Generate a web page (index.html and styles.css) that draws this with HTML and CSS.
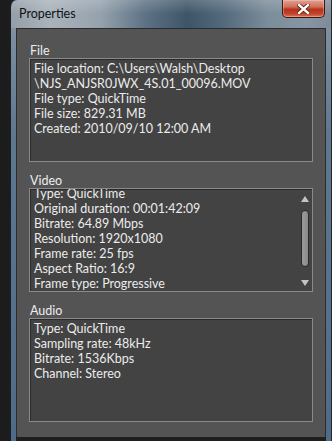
FILE: index.html
```html
<!DOCTYPE html>
<html>
<head>
	<title>Properties</title>
	<link rel="stylesheet" href="styles.css">
</head>
<body>
	<div class="window">
		<div class="titlebar">
			<span class="title">Properties</span>
			<button type="button" class="close">
				<svg width="13" height="10" viewBox="0 0 13 10">
					<path d="M2 1 L11 9 M11 1 L2 9" stroke="#5a1a10" stroke-width="4" stroke-linecap="square"/>
					<path d="M2 1 L11 9 M11 1 L2 9" stroke="#fff" stroke-width="2.4" stroke-linecap="square"/>
				</svg>
			</button>
		</div>

		<div class="client">
			<div class="panel">
				<div class="label">File</div>
				<div class="box">
					<div class="lines">
						<div>File location: C:\Users\Walsh\Desktop</div>
						<div>\NJS_ANJSR0JWX_4S.01_00096.MOV</div>
						<div>File type: QuickTime</div>
						<div>File size: 829.31 MB</div>
						<div>Created: 2010/09/10 12:00 AM</div>
					</div>
				</div>

				<div class="label">Video</div>
				<div class="box">
					<div class="viewport">
						<div class="lines scrolled">
							<div>Type: QuickTime</div>
							<div>Original duration: 00:01:42:09</div>
							<div>Bitrate: 64.89 Mbps</div>
							<div>Resolution: 1920x1080</div>
							<div>Frame rate: 25 fps</div>
							<div>Aspect Ratio: 16:9</div>
							<div>Frame type: Progressive</div>
						</div>
					</div>
					<div class="scrollbar">
						<div class="arrow-up"></div>
						<div class="thumb"></div>
						<div class="arrow-down"></div>
					</div>
				</div>

				<div class="label">Audio</div>
				<div class="box">
					<div class="lines">
						<div>Type: QuickTime</div>
						<div>Sampling rate: 48kHz</div>
						<div>Bitrate: 1536Kbps</div>
						<div>Channel: Stereo</div>
					</div>
				</div>
			</div>
		</div>
	</div>
</body>
</html>
```

FILE: styles.css
```css
html, body {
	margin: 0;
	height: 100%;
	overflow: hidden;
}

body {
	background: linear-gradient(90deg, #1c1c1c, #2e2e2e 70%, #262626);
	font-family: "Lato", "Liberation Sans", sans-serif;
	font-size: 12.5px;
	color: #ececec;
}

.window {
	margin-left: 10px;
	width: 321px;
	height: 441px;
	border-left: 1px solid #1a1f26;
	border-radius: 7px 0 0 0;
	padding: 0 5px 0 5px;
	box-sizing: border-box;
	background:
		linear-gradient(180deg, rgba(255,255,255,0.18), rgba(255,255,255,0) 14px) 0 0 / 100% 28px no-repeat,
		linear-gradient(90deg, #939ea8 0%, #aab3bb 12%, #95a2ad 28%, #5d7284 42%, #3e5568 55%, #52687b 66%, #7b8c9a 80%, #8796a2 92%, #7d8c98 100%) 0 0 / 100% 28px no-repeat,
		linear-gradient(180deg, #8797a6 0%, #5f7890 30%, #4e6b88 100%);
}

.titlebar {
	display: flex;
	justify-content: space-between;
	align-items: flex-start;
	height: 28px;
}

.title {
	font-size: 12.5px;
	line-height: 28px;
	color: #111;
	padding-left: 3px;
}

.close {
	width: 43px;
	height: 18px;
	margin-right: 1px;
	padding: 0;
	border: 1px solid #3b1810;
	border-top: none;
	border-radius: 0 0 5px 5px;
	background: linear-gradient(180deg, #e2a293 0%, #d0705b 40%, #b8321a 55%, #c1432a 80%, #d9735a 100%);
	box-shadow: inset 0 0 0 1px rgba(255,220,210,0.35);
	display: flex;
	align-items: center;
	justify-content: center;
}

.client {
	height: 413px;
	background: #1f1f1f;
}

.panel {
	height: 409px;
	box-sizing: border-box;
	background: #545454;
	border-top: 1px solid #2c2c2c;
	border-left: 1px solid #2c2c2c;
	border-right: 1px solid #2c2c2c;
	padding: 14px 12px 0 12px;
}

.label {
	line-height: 15px;
	padding-left: 1px;
}

.box {
	height: 104px;
	box-sizing: border-box;
	margin-bottom: 11px;
	background: #434343;
	border: 1px solid #8a8a8a;
	box-shadow: inset 1px 1px 0 #2a2a2a;
	display: flex;
	overflow: hidden;
}

.lines {
	flex: 1;
	padding: 2px 4px;
	line-height: 15px;
	white-space: nowrap;
	overflow: hidden;
}

.viewport {
	flex: 1;
	overflow: hidden;
}

.lines.scrolled {
	margin-top: -5px;
}

.scrollbar {
	width: 14px;
	display: flex;
	flex-direction: column;
	align-items: center;
	padding-top: 7px;
	box-sizing: border-box;
}

.arrow-up {
	border-left: 4px solid transparent;
	border-right: 4px solid transparent;
	border-bottom: 6px solid #c4c4c4;
}

.arrow-down {
	margin-top: 13px;
	border-left: 4px solid transparent;
	border-right: 4px solid transparent;
	border-top: 6px solid #c4c4c4;
}

.thumb {
	margin-top: 8px;
	width: 8px;
	height: 57px;
	box-sizing: border-box;
	border: 1px solid #2a2a2a;
	border-radius: 4px;
	background: linear-gradient(90deg, #9a9a9a, #8a8a8a);
}
```
